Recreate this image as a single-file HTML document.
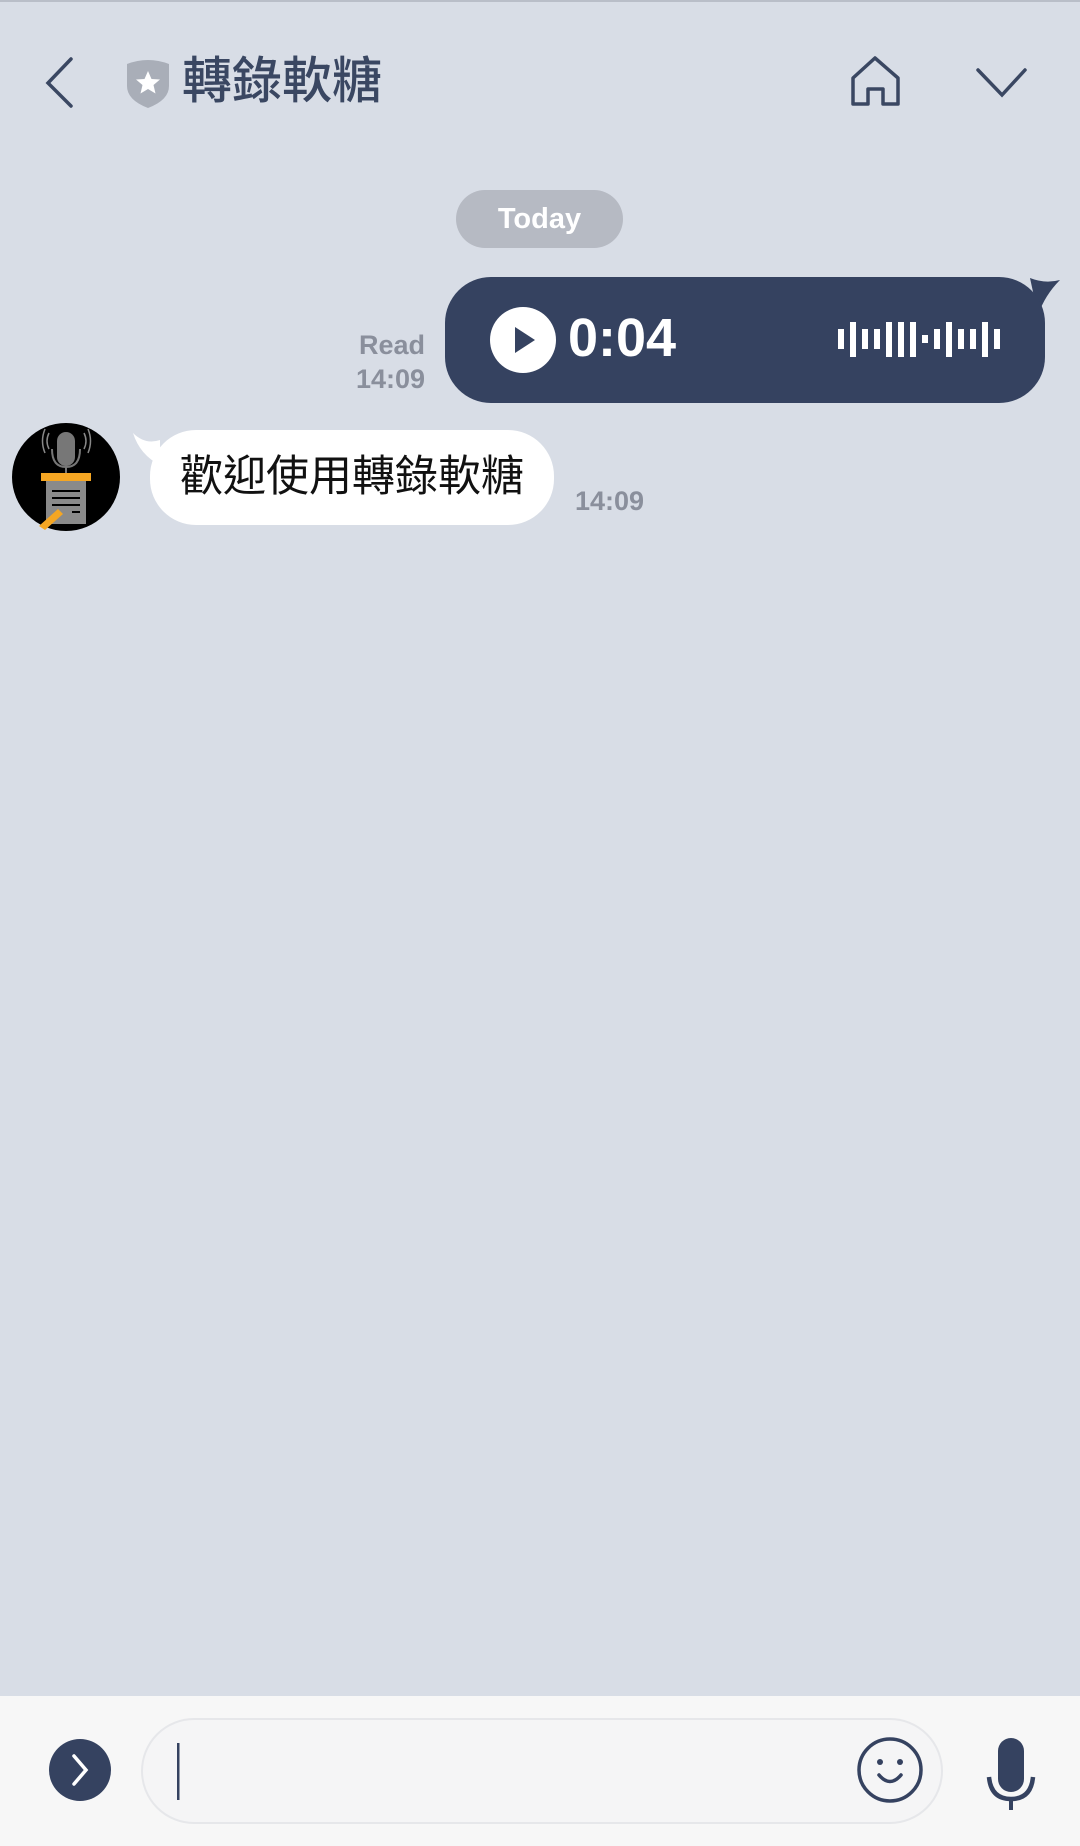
<!DOCTYPE html>
<html><head><meta charset="utf-8"><style>
*{margin:0;padding:0;box-sizing:border-box}
body{width:1080px;height:1846px;background:#d8dde6;position:relative;overflow:hidden;font-family:"Liberation Sans","Noto Sans CJK TC",sans-serif}
.abs{position:absolute}
</style></head><body>
<div class="abs" style="left:0;top:0;width:1080px;height:2px;background:#b9bec8"></div>
<svg class="abs" style="left:0;top:0" width="1080" height="130">
<path d="M71 59 L48 83 L71 106" fill="none" stroke="#3a4762" stroke-width="3.5" stroke-linecap="round"/>
<path d="M127 64 Q148 56 169 64 L169 86 Q169 100 148 108 Q127 100 127 86 Z" fill="#a9aeb8"/>
<path d="M148 71 l3.5 8 8.5 .5 -6.5 5.5 2 8.5 -7.5 -4.5 -7.5 4.5 2 -8.5 -6.5 -5.5 8.5 -.5z" fill="#fff"/>
<path d="M853 104 L853 78 L875 58 L898 78 L898 104 L883 104 L883 89 L868 89 L868 104 Z" fill="none" stroke="#3a4762" stroke-width="3.5" stroke-linejoin="round"/>
<path d="M978 70 L1002 95 L1025 70" fill="none" stroke="#3a4762" stroke-width="3.5" stroke-linecap="round"/>
</svg>
<div class="abs" style="left:182px;top:50px;font-size:50px;line-height:62px;color:#3a4762;font-weight:500">轉錄軟糖</div>
<div class="abs" style="left:456px;top:190px;width:167px;height:58px;border-radius:29px;background:#b6bac3;color:#fff;font-weight:bold;font-size:29px;line-height:58px;text-align:center">Today</div>
<div class="abs" style="left:300px;top:328px;width:125px;text-align:right;color:#8a8f9c;font-weight:bold;font-size:27px;line-height:34px">Read<br>14:09</div>
<svg class="abs" style="left:440px;top:270px" width="640" height="140">
<path d="M440 8 Q455 14 470 10 Q455 25 448 45 Z" fill="#354260" transform="translate(150,0)"/>
<rect x="5" y="7" width="600" height="126" rx="46" fill="#354260"/>
<circle cx="83" cy="70" r="33" fill="#fff"/>
<path d="M75 57 L95 70 L75 83 Z" fill="#354260"/>
<g fill="#fff">
<rect x="398" y="59" width="6" height="20"/><rect x="410" y="52" width="6" height="35"/><rect x="422" y="59" width="6" height="20"/><rect x="434" y="59" width="6" height="20"/><rect x="446" y="52" width="6" height="35"/><rect x="458" y="52" width="6" height="35"/><rect x="470" y="52" width="6" height="35"/><rect x="482" y="65" width="6" height="8"/><rect x="494" y="59" width="6" height="20"/><rect x="506" y="52" width="6" height="35"/><rect x="518" y="59" width="6" height="20"/><rect x="530" y="59" width="6" height="20"/><rect x="542" y="52" width="6" height="35"/><rect x="554" y="59" width="6" height="20"/>
</g>
</svg>
<div class="abs" style="left:568px;top:306px;font-size:54px;line-height:64px;color:#fff;font-weight:bold">0:04</div>
<svg class="abs" style="left:0;top:415px" width="600" height="120">
<circle cx="66" cy="62" r="54" fill="#000"/>
<rect x="57" y="17" width="18" height="34" rx="9" fill="#777"/>
<path d="M52 34 Q52 52 66 52 Q80 52 80 34" fill="none" stroke="#777" stroke-width="2"/>
<line x1="66" y1="52" x2="66" y2="58" stroke="#777" stroke-width="2"/>
<path d="M49 18 Q45 26 49 34 M84 18 Q88 26 84 34 M45 14 Q40 26 45 38 M88 14 Q93 26 88 38" fill="none" stroke="#888" stroke-width="1.5"/>
<rect x="41" y="58" width="50" height="8" fill="#f5a623"/>
<rect x="46" y="66" width="40" height="43" fill="#8a8a8a"/>
<g stroke="#000" stroke-width="2"><line x1="52" y1="76" x2="80" y2="76"/><line x1="52" y1="83" x2="80" y2="83"/><line x1="52" y1="90" x2="80" y2="90"/><line x1="72" y1="97" x2="80" y2="97"/></g>
<path d="M39 111 L58 94 L63 99 L45 115 Z" fill="#f5a623"/>
<path d="M133 18 Q145 30 160 25 L160 50 Q140 40 133 18 Z" fill="#fff"/>
<rect x="150" y="15" width="404" height="95" rx="46" fill="#fff"/>
</svg>
<div class="abs" style="left:180px;top:449px;font-size:43px;line-height:56px;color:#111">歡迎使用轉錄軟糖</div>
<div class="abs" style="left:575px;top:484px;font-size:27px;line-height:34px;color:#8a8f9c;font-weight:bold">14:09</div>
<div class="abs" style="left:0;top:1696px;width:1080px;height:150px;background:#f7f7f7"></div>
<div class="abs" style="left:141px;top:1718px;width:802px;height:106px;border-radius:53px;background:#f5f5f6;border:2px solid #e6e7ea"></div>
<svg class="abs" style="left:0;top:1696px" width="1080" height="150">
<circle cx="80" cy="74" r="31" fill="#354260"/>
<path d="M74 60 L86 74 L74 88" fill="none" stroke="#fff" stroke-width="3.5" stroke-linecap="round"/>
<rect x="177" y="47" width="2.5" height="57" fill="#354260"/>
<circle cx="890" cy="74" r="31" fill="none" stroke="#354260" stroke-width="3.5"/>
<circle cx="880" cy="66" r="3" fill="#354260"/><circle cx="900" cy="66" r="3" fill="#354260"/>
<path d="M879 79 Q890 92 901 79" fill="none" stroke="#354260" stroke-width="3.5" stroke-linecap="round"/>
<rect x="998" y="42" width="26" height="54" rx="13" fill="#354260"/>
<path d="M989 81 Q991 103 1011 103 Q1031 103 1033 81" fill="none" stroke="#354260" stroke-width="4.5"/>
<rect x="1009" y="102" width="4" height="12" fill="#354260"/>
</svg>
</body></html>
